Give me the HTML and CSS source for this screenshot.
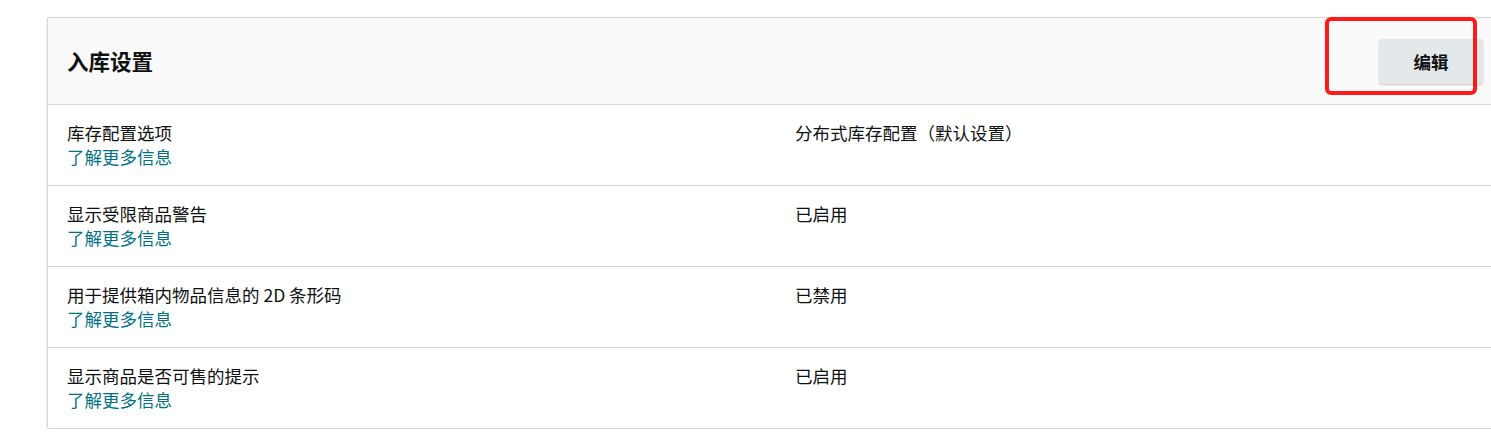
FILE: index.html
```html
<!DOCTYPE html>
<html>
<head>
  <meta charset="utf-8">
  <title>入库设置</title>
  <link rel="stylesheet" href="styles.css">
</head>
<body>
  <div class="card">
    <div class="card-header">
      <h2>入库设置</h2>
      <button class="btn-edit">编辑</button>
      <div class="mark"></div>
    </div>
    <div class="row">
      <div class="label">
        <div>库存配置选项</div>
        <a href="#">了解更多信息</a>
      </div>
      <div class="value">分布式库存配置（默认设置）</div>
    </div>
    <div class="row">
      <div class="label">
        <div>显示受限商品警告</div>
        <a href="#">了解更多信息</a>
      </div>
      <div class="value">已启用</div>
    </div>
    <div class="row">
      <div class="label">
        <div>用于提供箱内物品信息的 2D 条形码</div>
        <a href="#">了解更多信息</a>
      </div>
      <div class="value">已禁用</div>
    </div>
    <div class="row">
      <div class="label">
        <div>显示商品是否可售的提示</div>
        <a href="#">了解更多信息</a>
      </div>
      <div class="value">已启用</div>
    </div>
  </div>
</body>
</html>
```

FILE: styles.css
```css
body { margin: 0; padding: 17px 0 0 47px; overflow: hidden; background: #fff; color: #0f1111; font-family: "Noto Sans CJK SC", "Noto Sans", sans-serif; font-size: 17.5px; line-height: 24px; }
.card { width: 1456px; box-sizing: border-box; border: 1px solid #d5d9d9; border-radius: 2px; box-shadow: 0 1px 3px rgba(15, 17, 17, 0.15); background: #fff; }
.card-header { position: relative; display: flex; align-items: center; justify-content: space-between; height: 86px; padding: 0 19px 0 19px; background: #fafafa; border-bottom: 1px solid #d5d9d9; }
.card-header h2 { margin: 0; font-size: 21.5px; font-weight: 700; }
.btn-edit { width: 104px; height: 45px; border: none; border-radius: 3px; background: #e3e9ea; box-shadow: 0 1px 2px rgba(15, 17, 17, 0.2); color: #0f1111; font-family: inherit; font-size: 17.5px; font-weight: 700; cursor: pointer; }
.mark { position: absolute; left: 1277px; top: -1px; width: 144px; height: 70px; border: 4px solid #ff1a1a; border-radius: 6px; pointer-events: none; }
.row { display: grid; grid-template-columns: 728px 1fr; padding: 16px 19px 16px 19px; border-bottom: 1px solid #d5d9d9; }
.row:last-child { border-bottom: none; }
.label a { color: #007185; text-decoration: none; }
```
